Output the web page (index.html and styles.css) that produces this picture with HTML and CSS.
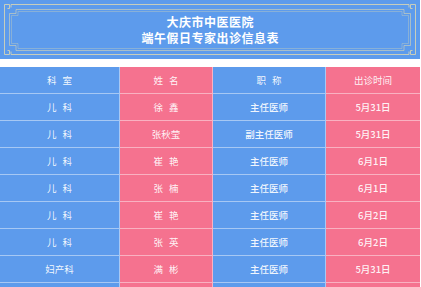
FILE: index.html
```html
<!DOCTYPE html>
<html lang="zh">
<head>
<meta charset="utf-8">
<link rel="stylesheet" href="styles.css">
</head>
<body>
<div class="page">
  <header class="banner">
    <svg class="frame" width="420" height="59" viewBox="0 0 420 59" fill="none" stroke="#d9d6b4" stroke-width="1" stroke-opacity="0.85">
      <path d="M11 4.5 H409 M11 54.5 H409 M4.5 12 V47 M415.5 12 V47"/>
      <path d="M4.5 12 V4.5 H9.5 V8.5 H7.5 M11 4.5 V7.5"/>
      <path d="M415.5 12 V4.5 H410.5 V8.5 H412.5 M409 4.5 V7.5"/>
      <path d="M4.5 47 V54.5 H9.5 V50.5 H7.5 M11 54.5 V51.5"/>
      <path d="M415.5 47 V54.5 H410.5 V50.5 H412.5 M409 54.5 V51.5"/>
      <path d="M16 9.5 H404 V13.5 H410.5 V45.5 H404 V50.5 H16 V45.5 H9.5 V13.5 H16 Z" stroke-opacity="0.6"/>
      <path d="M18 11.5 H402 V15.5 H408.5 V43.5 H402 V48.5 H18 V43.5 H11.5 V15.5 H18 Z" stroke-opacity="0.35"/>
    </svg>
    <div class="title">大庆市中医医院</div>
    <div class="title">端午假日专家出诊信息表</div>
  </header>
  <div class="table">
    <div class="cell blue head sp">科 室</div>
    <div class="cell pink head sp">姓 名</div>
    <div class="cell blue head sp">职 称</div>
    <div class="cell pink head">出诊时间</div>

    <div class="cell blue sp">儿 科</div>
    <div class="cell pink sp">徐 鑫</div>
    <div class="cell blue strong">主任医师</div>
    <div class="cell pink strong">5月31日</div>

    <div class="cell blue sp">儿 科</div>
    <div class="cell pink">张秋莹</div>
    <div class="cell blue strong">副主任医师</div>
    <div class="cell pink strong">5月31日</div>

    <div class="cell blue sp">儿 科</div>
    <div class="cell pink sp">崔 艳</div>
    <div class="cell blue strong">主任医师</div>
    <div class="cell pink strong">6月1日</div>

    <div class="cell blue sp">儿 科</div>
    <div class="cell pink sp">张 楠</div>
    <div class="cell blue strong">主任医师</div>
    <div class="cell pink strong">6月1日</div>

    <div class="cell blue sp">儿 科</div>
    <div class="cell pink sp">崔 艳</div>
    <div class="cell blue strong">主任医师</div>
    <div class="cell pink strong">6月2日</div>

    <div class="cell blue sp">儿 科</div>
    <div class="cell pink sp">张 英</div>
    <div class="cell blue strong">主任医师</div>
    <div class="cell pink strong">6月2日</div>

    <div class="cell blue">妇产科</div>
    <div class="cell pink sp">满 彬</div>
    <div class="cell blue strong">主任医师</div>
    <div class="cell pink strong">5月31日</div>

    <div class="cell blue"></div>
    <div class="cell pink"></div>
    <div class="cell blue"></div>
    <div class="cell pink"></div>
  </div>
</div>
</body>
</html>
```
FILE: styles.css
```css
* { box-sizing: border-box; }
html, body { margin: 0; padding: 0; background: #ffffff; }
body { overflow: hidden; font-family: "Noto Sans CJK SC", "Noto Sans", sans-serif; }
.page { width: 420px; display: flex; flex-direction: column; gap: 8px; }
.banner {
  position: relative;
  height: 59px;
  background: #5d9bec;
  display: flex;
  flex-direction: column;
  align-items: center;
  justify-content: center;
  padding-top: 1px;
}
.frame { position: absolute; left: 0; top: 0; }
.title {
  color: #ffffff;
  font-size: 12px;
  font-weight: 700;
  line-height: 16px;
  letter-spacing: 0.5px;
  padding-left: 0.5px;
}
.table {
  display: grid;
  grid-template-columns: 120px 93px 113px 94px;
  grid-auto-rows: 27px;
}
.cell {
  display: flex;
  align-items: center;
  justify-content: center;
  font-size: 9.5px;
  line-height: 1;
  color: rgba(255, 255, 255, 0.93);
  border-bottom: 1px solid rgba(255, 255, 255, 0.45);
  border-right: 1px solid rgba(255, 255, 255, 0.45);
  padding-top: 1px;
}
.cell:nth-child(4n) { border-right: none; }
.blue { background: #5d9bec; }
.pink { background: #f5728f; }
.sp { letter-spacing: 2px; padding-left: 2px; }
.strong { font-weight: 500; }
.head { font-weight: 400; }
```
